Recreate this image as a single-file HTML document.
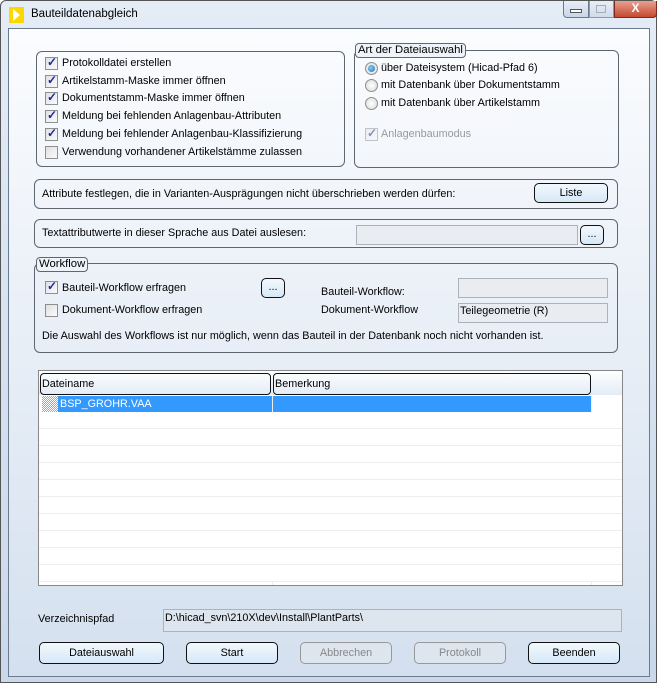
<!DOCTYPE html><html><head><meta charset="utf-8"><style>
*{box-sizing:border-box;margin:0;padding:0}
body{width:657px;height:683px;overflow:hidden;font-family:"Liberation Sans",sans-serif;font-size:10.8px;color:#000;background:#fff;position:relative}
.a{position:absolute;white-space:nowrap}
.win{position:absolute;left:0;top:0;width:657px;height:683px;background:linear-gradient(#e4ecf6,#c9d8ea);border:1px solid #555;border-radius:6px 6px 0 0}
.client{position:absolute;left:7px;top:27px;width:642px;height:649px;border:1px solid #6b7a8c;background:linear-gradient(#fbfcfe,#d4e0ef)}
.grp{position:absolute;border:1px solid #5e6670;border-radius:6px}
.lg{position:absolute;background:#eef3f9;border:1px solid #5e6670;border-radius:4px;padding:0 2px;line-height:13px;font-size:11.3px}
.cb{position:absolute;width:13px;height:13px;border:1px solid #8e8f8f;background:linear-gradient(135deg,#e0e0e0,#fafafa)}
.cb.c::after{content:"✓";position:absolute;left:1px;top:-3px;font-size:12px;color:#1a2a9a;font-weight:bold}
.cb.d{opacity:.5}
.rb{position:absolute;width:13px;height:13px;border-radius:50%;border:1px solid #8e8f8f;background:radial-gradient(#fff,#d8d8d8)}
.rb.s::after{content:"";position:absolute;left:2px;top:2px;width:7px;height:7px;border-radius:50%;background:radial-gradient(circle at 40% 40%,#7fd0ff,#1a6fb5)}
.btn{position:absolute;border:1px solid #111;border-radius:5px;background:linear-gradient(#f2f8fd,#d6e8f7);text-align:center;font-size:10.8px}
.btn.dis{border-color:#999;color:#888;background:#dde5ef}
.fld{position:absolute;border:1px solid #aab3bd;background:#e9edf2}
</style></head><body>
<div class="win">
<div class="a" style="left:8px;top:6px;width:15px;height:16px;background:#ffd700"></div>
<div class="a" style="left:12px;top:8px;width:0;height:0;border-left:7px solid #fff;border-top:6px solid transparent;border-bottom:6px solid transparent"></div>
<div class="a" style="left:30px;top:7px;font-size:11.5px">Bauteildatenabgleich</div>
<div class="a" style="left:562px;top:0;width:26px;height:17px;border:1px solid #6a7a8c;border-top:none;border-radius:0 0 0 4px;background:linear-gradient(#e8eef6,#c8d6e8)"></div>
<div class="a" style="left:569px;top:8px;width:12px;height:4px;border:1px solid #555;background:#fff"></div>
<div class="a" style="left:588px;top:0;width:25px;height:17px;border:1px solid #8a9aac;border-top:none;background:linear-gradient(#e8eef6,#d0dcea)"></div>
<div class="a" style="left:595px;top:4px;width:10px;height:8px;border:1px solid #aab;"></div>
<div class="a" style="left:613px;top:0;width:43px;height:17px;border:1px solid #7a2a20;border-top:none;border-radius:0 0 4px 0;background:linear-gradient(#e8a090,#c44a30);color:#fff;font-weight:bold;text-align:center;font-size:12px;line-height:15px">X</div>
<div class="client"></div>

<div class="grp" style="left:35px;top:50px;width:309px;height:116px"></div>
<div class="cb c" style="left:44px;top:56px"></div><div class="a" style="left:61px;top:56px">Protokolldatei erstellen</div>
<div class="cb c" style="left:44px;top:74px"></div><div class="a" style="left:61px;top:74px">Artikelstamm-Maske immer öffnen</div>
<div class="cb c" style="left:44px;top:91px"></div><div class="a" style="left:61px;top:91px">Dokumentstamm-Maske immer öffnen</div>
<div class="cb c" style="left:44px;top:109px"></div><div class="a" style="left:61px;top:109px">Meldung bei fehlenden Anlagenbau-Attributen</div>
<div class="cb c" style="left:44px;top:127px"></div><div class="a" style="left:61px;top:127px">Meldung bei fehlender Anlagenbau-Klassifizierung</div>
<div class="cb" style="left:44px;top:145px"></div><div class="a" style="left:61px;top:145px">Verwendung vorhandener Artikelstämme zulassen</div>

<div class="grp" style="left:353px;top:49px;width:265px;height:118px"></div>
<div class="lg" style="left:354px;top:42px">Art der Dateiauswahl</div>
<div class="rb s" style="left:364px;top:61px"></div><div class="a" style="left:380px;top:61px">über Dateisystem (Hicad-Pfad 6)</div>
<div class="rb" style="left:364px;top:78px"></div><div class="a" style="left:380px;top:78px">mit Datenbank über Dokumentstamm</div>
<div class="rb" style="left:364px;top:96px"></div><div class="a" style="left:380px;top:96px">mit Datenbank über Artikelstamm</div>
<div class="cb c d" style="left:364px;top:127px"></div><div class="a" style="left:380px;top:127px;color:#999">Anlagenbaumodus</div>

<div class="grp" style="left:33px;top:178px;width:584px;height:30px"></div>
<div class="a" style="left:41px;top:187px">Attribute festlegen, die in Varianten-Ausprägungen nicht überschrieben werden dürfen:</div>
<div class="btn" style="left:533px;top:182px;width:74px;height:20px;line-height:18px">Liste</div>

<div class="grp" style="left:33px;top:218px;width:584px;height:29px"></div>
<div class="a" style="left:41px;top:226px">Textattributwerte in dieser Sprache aus Datei auslesen:</div>
<div class="fld" style="left:355px;top:224px;width:222px;height:20px"></div>
<div class="btn" style="left:579px;top:224px;width:24px;height:20px;line-height:16px">...</div>

<div class="grp" style="left:33px;top:262px;width:584px;height:90px"></div>
<div class="lg" style="left:35px;top:256px">Workflow</div>
<div class="cb c" style="left:44px;top:280px"></div><div class="a" style="left:61px;top:281px">Bauteil-Workflow erfragen</div>
<div class="btn" style="left:260px;top:277px;width:24px;height:20px;line-height:16px">...</div>
<div class="a" style="left:320px;top:285px">Bauteil-Workflow:</div>
<div class="fld" style="left:457px;top:277px;width:150px;height:20px"></div>
<div class="cb" style="left:44px;top:303px"></div><div class="a" style="left:61px;top:303px">Dokument-Workflow erfragen</div>
<div class="a" style="left:320px;top:303px">Dokument-Workflow</div>
<div class="fld" style="left:457px;top:302px;width:150px;height:20px"></div><div class="a" style="left:459px;top:304px">Teilegeometrie (R)</div>
<div class="a" style="left:41px;top:329px">Die Auswahl des Workflows ist nur möglich, wenn das Bauteil in der Datenbank noch nicht vorhanden ist.</div>

<div class="a" style="left:37px;top:369px;width:585px;height:216px;border:1px solid #888;background:#fff;overflow:hidden">
<div class="a" style="left:0;top:0;width:583px;height:24px;background:linear-gradient(#fff,#e2ebf6)"></div>
<div class="a" style="left:1px;top:2px;width:231px;height:22px;border:1px solid #111;border-radius:4px;padding:4px 1px">Dateiname</div>
<div class="a" style="left:234px;top:2px;width:318px;height:22px;border:1px solid #111;border-radius:4px;padding:4px 1px">Bemerkung</div>
<div class="a" style="left:3px;top:25px;width:550px;height:16px;background:#3399ff"></div>
<div class="a" style="left:3px;top:25px;width:16px;height:16px;background:repeating-conic-gradient(#9ab 0 25%,#fff 0 50%) 0 0/2px 2px"></div>
<div class="a" style="left:21px;top:27px;color:#fff">BSP_GROHR.VAA</div>
<div class="a" style="left:233px;top:24px;width:1px;height:192px;background:#eee"></div>
<div class="a" style="left:552px;top:24px;width:1px;height:192px;background:#eee"></div>
<div class="a" style="left:0;top:41px;width:583px;height:170px;background:repeating-linear-gradient(#fff 0 16px,#eee 16px 17px)"></div>
</div>

<div class="a" style="left:37px;top:612px">Verzeichnispfad</div>
<div class="fld" style="left:162px;top:608px;width:459px;height:23px;background:#dde5ee"></div>
<div class="a" style="left:164px;top:611px">D:\hicad_svn\210X\dev\Install\PlantParts\</div>

<div class="btn" style="left:38px;top:641px;width:125px;height:22px;line-height:20px">Dateiauswahl</div>
<div class="btn" style="left:185px;top:641px;width:92px;height:22px;line-height:20px">Start</div>
<div class="btn dis" style="left:299px;top:641px;width:92px;height:22px;line-height:20px">Abbrechen</div>
<div class="btn dis" style="left:413px;top:641px;width:92px;height:22px;line-height:20px">Protokoll</div>
<div class="btn" style="left:527px;top:641px;width:92px;height:22px;line-height:20px">Beenden</div>
</div>
</body></html>
